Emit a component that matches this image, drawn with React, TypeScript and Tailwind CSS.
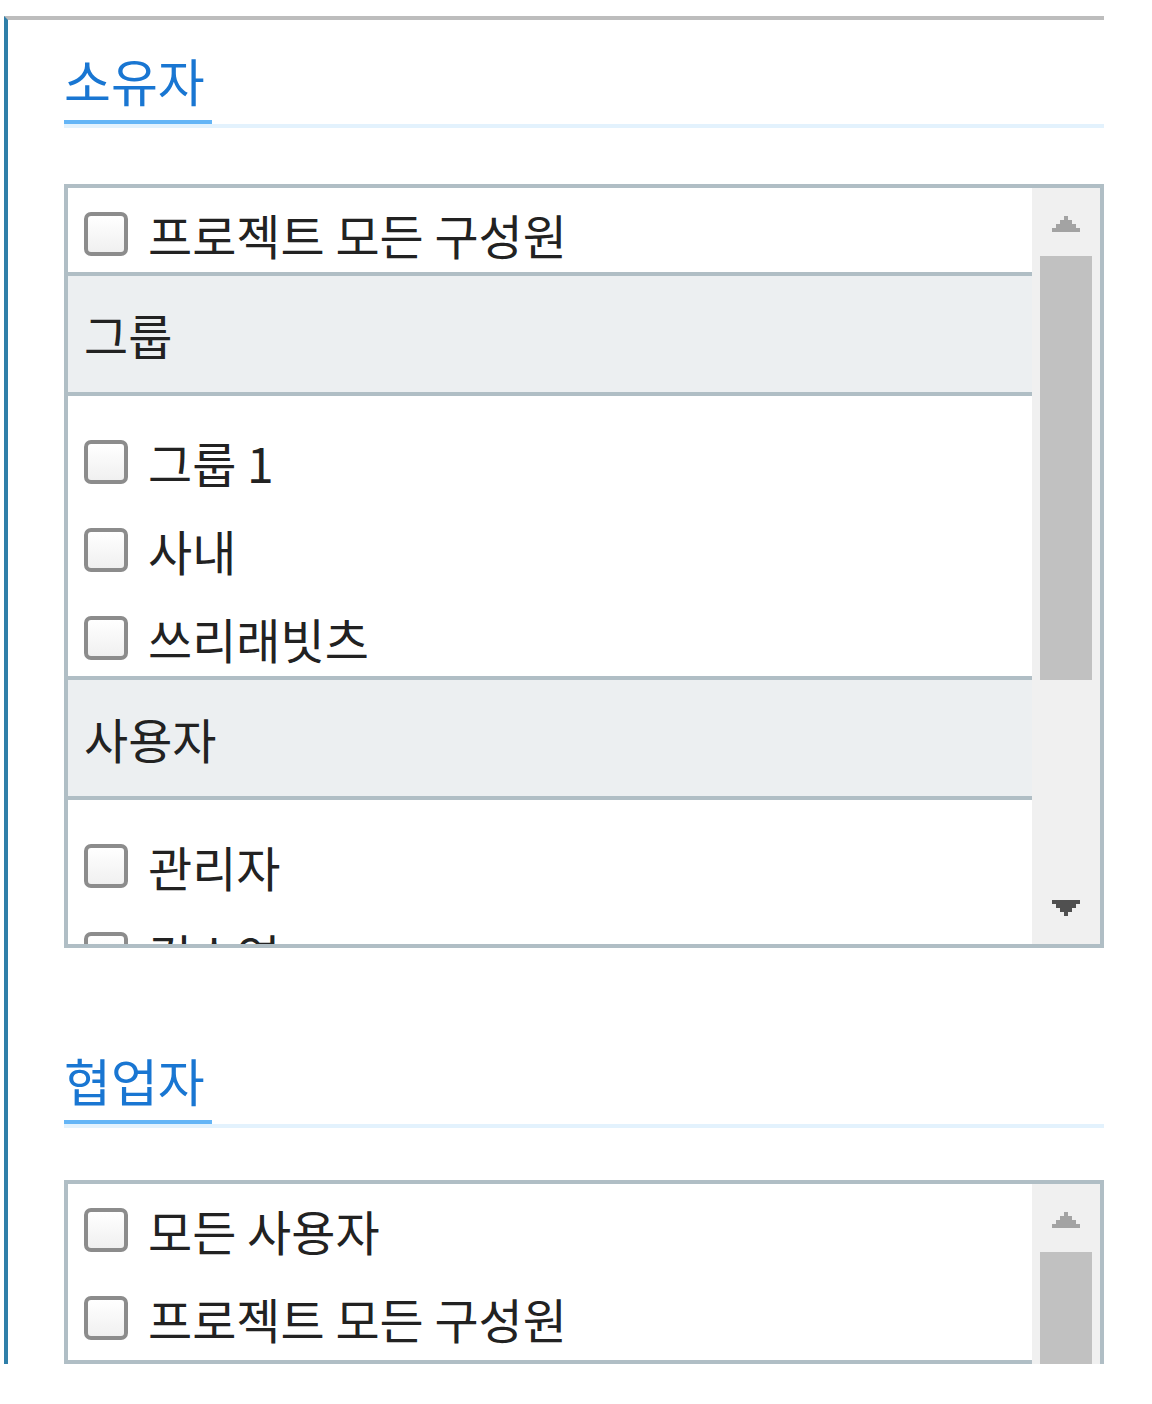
import React from "react";

const font = { fontFamily: '"Noto Sans CJK KR", "Noto Sans", sans-serif' };

function Arrow({ up }: { up?: boolean }) {
  return (
    <svg width="28" height="16" viewBox="0 0 28 16" shapeRendering="crispEdges">
      <g fill={up ? "#a3a3a3" : "#505050"} transform={up ? undefined : "matrix(1 0 0 -1 0 16)"}>
        <rect x="12" y="0" width="4" height="4" />
        <rect x="8" y="4" width="12" height="4" />
        <rect x="4" y="8" width="20" height="4" />
        <rect x="0" y="12" width="28" height="4" />
      </g>
    </svg>
  );
}

function Check() {
  return (
    <span className="block h-[44px] w-[44px] shrink-0 rounded-[7px] border-[4px] border-[#8c8c8c] bg-gradient-to-b from-white to-[#f0f0f0]" />
  );
}

function Item({ label, tall = true }: { label: string; tall?: boolean }) {
  return (
    <div className={`flex items-start gap-[20px] pl-[16px] pt-[24px] ${tall ? "h-[88px]" : "h-[84px]"}`}>
      <Check />
      <span className="text-[48px] leading-[44px] text-[#222]">{label}</span>
    </div>
  );
}

function Header({ label }: { label: string }) {
  return (
    <div className="flex h-[124px] items-center border-y-[4px] border-[#b0bec5] bg-[#eceff1] pl-[16px] text-[48px] text-[#222]">
      {label}
    </div>
  );
}

function Scrollbar({ thumb }: { thumb: number }) {
  return (
    <div className="flex w-[68px] shrink-0 flex-col items-center bg-[#f0f0f0]">
      <div className="flex h-[68px] items-start justify-center pt-[28px]">
        <Arrow up />
      </div>
      <div className="w-[52px] bg-[#c1c1c1]" style={{ height: thumb }} />
      <div className="flex-1" />
      <div className="flex h-[44px] items-start justify-center">
        <Arrow />
      </div>
    </div>
  );
}

function Title({ label }: { label: string }) {
  return (
    <div className="flex flex-col items-start">
      <div className="w-[148px] border-b-[4px] border-[#64b5f6] pb-[15px] text-[51px] leading-[50px] text-[#1976d2]">
        {label}
      </div>
      <div className="h-[4px] w-full bg-[#e3f2fd]" />
    </div>
  );
}

export default function App() {
  return (
    <div className="min-h-[1404px] bg-white pt-[16px] pl-[4px]" style={font}>
      <div className="h-[1348px] w-[1100px] overflow-hidden border-l-[4px] border-t-[4px] border-l-[#2f7fa9] border-t-[#bdbdbd] pl-[56px]">
        {/* 소유자 */}
        <div className="pt-[35px]">
          <Title label="소유자" />
        </div>
        <div className="mt-[56px] flex h-[764px] border-[4px] border-[#b0bec5]">
          <div className="min-w-0 flex-1 overflow-hidden">
            <Item label="프로젝트 모든 구성원" tall={false} />
            <Header label="그룹" />
            <div className="h-[280px] overflow-hidden pt-[20px]">
              <Item label="그룹 1" />
              <Item label="사내" />
              <Item label="쓰리래빗츠" />
            </div>
            <Header label="사용자" />
            <div className="pt-[20px]">
              <Item label="관리자" />
              <Item label="김소연" />
              <Item label="박지훈" />
            </div>
          </div>
          <Scrollbar thumb={424} />
        </div>

        {/* 협업자 */}
        <div className="pt-[107px]">
          <Title label="협업자" />
        </div>
        <div className="mt-[52px] flex h-[764px] border-[4px] border-[#b0bec5]">
          <div className="min-w-0 flex-1 overflow-hidden">
            <Item label="모든 사용자" />
            <Item label="프로젝트 모든 구성원" />
            <Header label="그룹" />
            <div className="pt-[20px]">
              <Item label="그룹 1" />
              <Item label="사내" />
            </div>
          </div>
          <Scrollbar thumb={424} />
        </div>
      </div>
    </div>
  );
}
